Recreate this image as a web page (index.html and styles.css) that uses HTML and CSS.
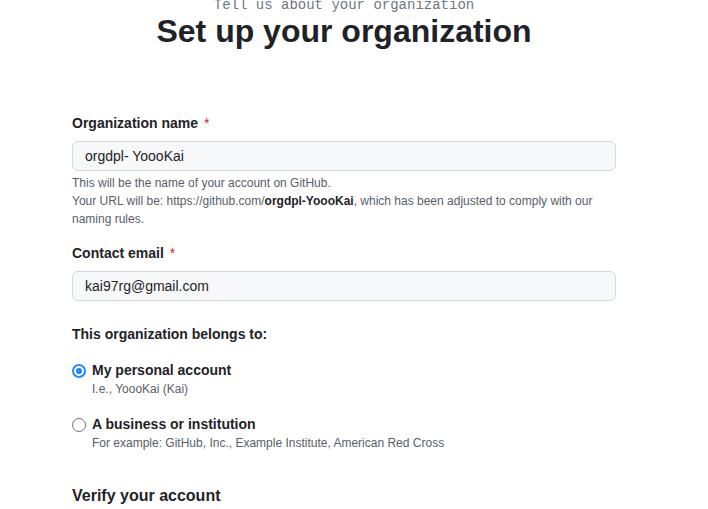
FILE: index.html
```html
<!DOCTYPE html>
<html lang="en">
<head>
<meta charset="utf-8">
<title>Set up your organization</title>
<link rel="stylesheet" href="styles.css">
</head>
<body>
<header class="intro">
  <p class="eyebrow">Tell us about your organization</p>
  <h1 class="title">Set up your organization</h1>
</header>
<form class="form">
  <div class="field">
    <label class="label">Organization name <span class="req">*</span></label>
    <div class="input">orgdpl- YoooKai</div>
    <p class="hint">This will be the name of your account on GitHub.<br>Your URL will be: https://github.com/<strong>orgdpl-YoooKai</strong>, which has been adjusted to comply with our naming rules.</p>
  </div>
  <div class="field field-email">
    <label class="label">Contact email <span class="req">*</span></label>
    <div class="input">kai97rg@gmail.com</div>
  </div>
  <div class="group">
    <p class="label">This organization belongs to:</p>
    <div class="option">
      <span class="radio radio-on"></span>
      <div class="option-text">
        <div class="option-title">My personal account</div>
        <div class="option-note">I.e., YoooKai (Kai)</div>
      </div>
    </div>
    <div class="option">
      <span class="radio"></span>
      <div class="option-text">
        <div class="option-title">A business or institution</div>
        <div class="option-note">For example: GitHub, Inc., Example Institute, American Red Cross</div>
      </div>
    </div>
  </div>
  <h2 class="section">Verify your account</h2>
</form>
</body>
</html>
```
FILE: styles.css
```css
html, body {
  margin: 0;
  padding: 0;
  background: #ffffff;
}
body {
  font-family: "Liberation Sans", Arial, sans-serif;
  color: #1f2328;
  overflow: hidden;
}
p { margin: 0; }
.intro {
  text-align: center;
  margin-top: -5px;
  padding-right: 20px;
}
.eyebrow {
  font-family: "Liberation Mono", monospace;
  font-size: 14px;
  line-height: 20px;
  color: #6e7781;
}
.title {
  margin: -4px 0 0;
  font-size: 32px;
  line-height: 40px;
  font-weight: 700;
  color: #1f2328;
}
.form {
  width: 544px;
  margin: 62px 0 0 72px;
}
.label {
  display: block;
  font-size: 14px;
  line-height: 20px;
  font-weight: 700;
  color: #1f2328;
}
.req {
  color: #cf222e;
  font-weight: 400;
  margin-left: 2px;
}
.input {
  box-sizing: border-box;
  margin-top: 8px;
  height: 30px;
  padding: 0 12px;
  border: 1px solid #d0d7de;
  border-radius: 6px;
  background: #f6f8fa;
  font-size: 14px;
  line-height: 28px;
  color: #1f2328;
}
.hint {
  margin-top: 3px;
  font-size: 12px;
  line-height: 18px;
  color: #57606a;
}
.hint strong { color: #1f2328; }
.field-email { margin-top: 15px; }
.group { margin-top: 23px; }
.option {
  display: flex;
  gap: 6px;
  margin-top: 16px;
}
.radio {
  box-sizing: border-box;
  flex: none;
  width: 14px;
  height: 14px;
  margin-top: 4px;
  border: 1.5px solid #6e7781;
  border-radius: 50%;
}
.radio-on {
  border: 2px solid #218bff;
  background: radial-gradient(circle, #218bff 0 2.8px, #ffffff 3.3px);
}
.option-title {
  font-size: 14px;
  line-height: 20px;
  font-weight: 700;
}
.option-note {
  font-size: 12px;
  line-height: 18px;
  color: #57606a;
}
.section {
  margin: 32px 0 0;
  font-size: 16px;
  line-height: 24px;
  font-weight: 700;
}
```
